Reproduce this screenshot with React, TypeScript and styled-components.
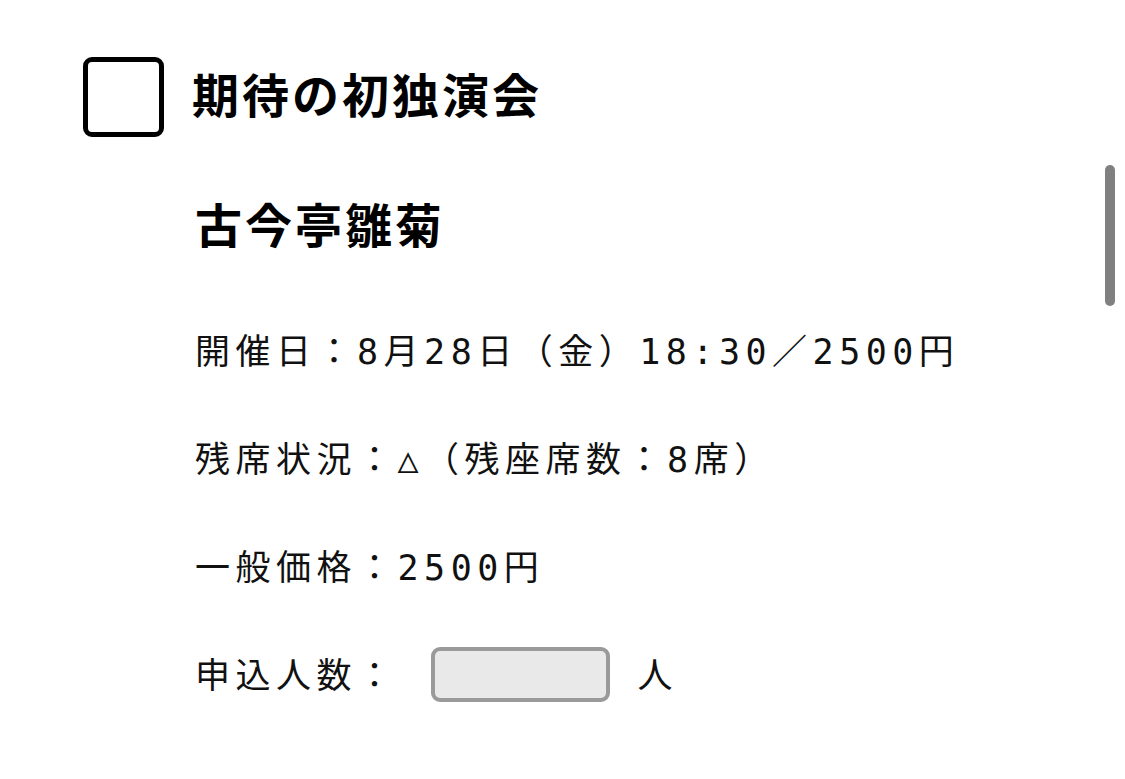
import React from 'react';
import styled, { createGlobalStyle } from 'styled-components';

const GlobalStyle = createGlobalStyle`
	html, body {
		margin: 0;
		padding: 0;
		background: #ffffff;
		overflow: hidden;
	}
	body {
		font-family: 'Noto Sans CJK JP', 'Noto Sans', sans-serif;
		color: #111111;
	}
`;

const Page = styled.div`
	position: relative;
	width: 1125px;
	height: 779px;
	box-sizing: border-box;
	padding: 57px 0 0 83px;
`;

const TitleRow = styled.label`
	display: flex;
	align-items: center;
	gap: 28px;
`;

const CheckBox = styled.span`
	display: block;
	flex: none;
	width: 81px;
	height: 80px;
	box-sizing: border-box;
	border: 5px solid #000000;
	border-radius: 9px;
	background: #ffffff;
`;

const Title = styled.h1`
	margin: 0 0 8px;
	font-size: 47px;
	line-height: 60px;
	font-weight: 700;
	letter-spacing: 3px;
	color: #000000;
`;

const Details = styled.div`
	display: flex;
	flex-direction: column;
	margin-left: 112px;
`;

const Performer = styled.h2`
	margin: 56px 0 0;
	font-size: 47px;
	line-height: 60px;
	font-weight: 700;
	letter-spacing: 3px;
	color: #000000;
`;

const InfoList = styled.div`
	display: flex;
	flex-direction: column;
	gap: 58px;
	margin-top: 70px;
`;

const InfoRow = styled.div`
	display: flex;
	align-items: center;
	height: 50px;
	font-family: 'DejaVu Sans Mono', 'Noto Sans CJK JP', monospace;
	font-size: 35px;
	letter-spacing: 5.5px;
	white-space: nowrap;
`;

const CountInput = styled.input`
	flex: none;
	width: 179px;
	height: 55px;
	box-sizing: border-box;
	margin: 4px 28px 0 33px;
	border: 4px solid #9a9a9a;
	border-radius: 9px;
	background: #e9e9e9;
	outline: none;
	font-size: 28px;
	padding: 0 10px;
`;

const ScrollThumb = styled.div`
	position: absolute;
	top: 165px;
	right: 10px;
	width: 10px;
	height: 141px;
	border-radius: 5px;
	background: #808080;
`;

const rows = [
	'開催日：8月28日（金）18:30／2500円',
	'残席状況：△（残座席数：8席）',
	'一般価格：2500円',
];

export default function App() {
	return (
		<>
			<GlobalStyle />
			<Page>
				<TitleRow>
					<CheckBox />
					<Title>期待の初独演会</Title>
				</TitleRow>
				<Details>
					<Performer>古今亭雛菊</Performer>
					<InfoList>
						{rows.map((row) => (
							<InfoRow key={row}>{row}</InfoRow>
						))}
						<InfoRow>
							申込人数：
							<CountInput type="text" />人
						</InfoRow>
					</InfoList>
				</Details>
				<ScrollThumb />
			</Page>
		</>
	);
}
